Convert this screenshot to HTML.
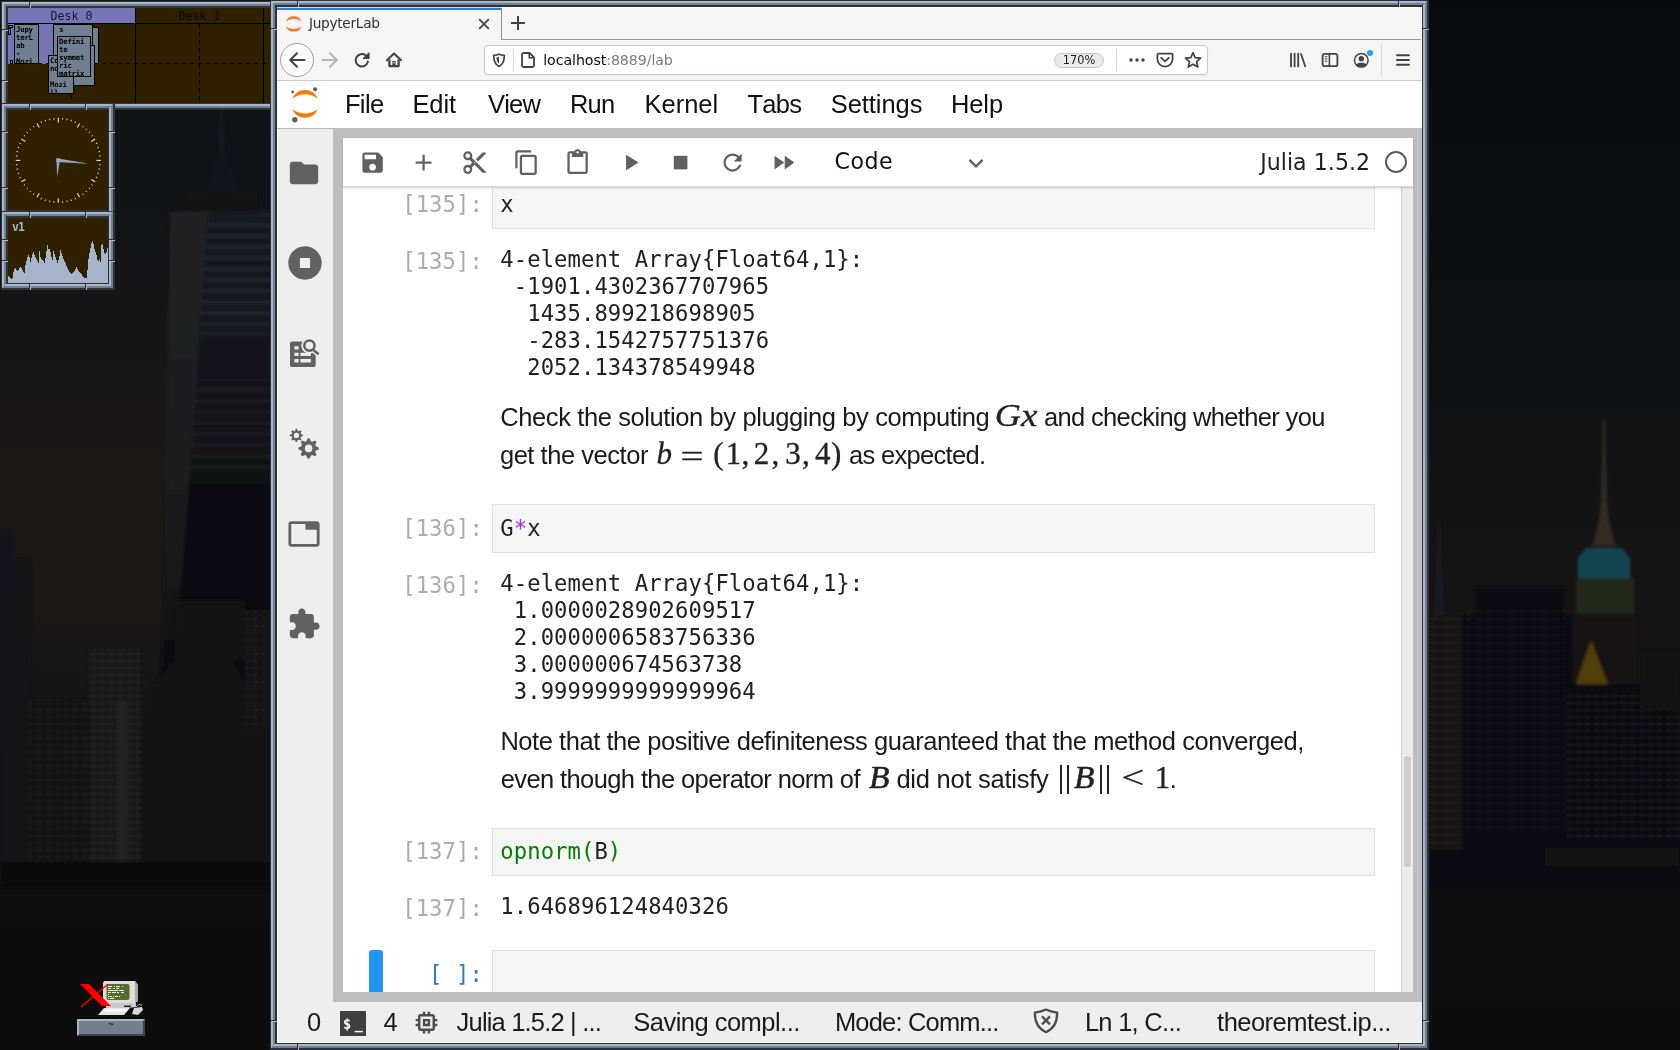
<!DOCTYPE html>
<html lang="en"><head><meta charset="utf-8"><title>JupyterLab</title>
<style>
html,body{margin:0;padding:0}
body{width:1680px;height:1050px;position:relative;overflow:hidden;background:#0d0f14;font-family:"Liberation Sans",sans-serif}
.a{position:absolute}
.t{position:absolute;white-space:pre;line-height:1}
.fr{position:absolute;box-sizing:border-box}
.f1,.f2,.f3,.f4{box-sizing:border-box;width:100%;height:100%;border-style:solid}
.f1{border-color:#2e3338;border-width:1px 2px 2px 1px}
.f2{border-color:#a9b5c8 #708090 #708090 #a9b5c8;border-width:2px}
.f3{border-color:#708090 #a9b5c8 #a9b5c8 #708090;border-width:2px}
.f4{border-color:#2e3338;border-width:2px 1px 1px 2px;position:relative;overflow:hidden}
.nv,.nh{position:absolute;background:#2e3338}
.nv{width:1px;height:6px;box-shadow:1px 0 0 #a9b5c8}
.nh{height:1px;width:6px;box-shadow:0 1px 0 #a9b5c8}
.mono{font-family:"DejaVu Sans Mono","Liberation Mono",monospace}
.dv{font-family:"DejaVu Sans","Liberation Sans",sans-serif}
.ser{font-family:"Liberation Serif",serif}
.mw{background:#708090;border:1px solid #000;box-sizing:border-box;overflow:hidden}
.mt{position:absolute;left:1px;top:1px;font-size:7.4px;line-height:8px;color:#000;white-space:pre;font-weight:bold;letter-spacing:-0.25px}
#root{position:absolute;left:0;top:0;width:1680px;height:1050px;overflow:hidden;will-change:transform}

</style></head>
<body>
<div id="root">
<svg class="a" style="left:0;top:0" width="1680" height="1050" viewBox="0 0 1680 1050">
<defs>
<linearGradient id="sky" x1="0" y1="0" x2="0" y2="1">
<stop offset="0" stop-color="#0a0e13"/><stop offset="0.2" stop-color="#0e1216"/><stop offset="0.38" stop-color="#121517"/>
<stop offset="0.5" stop-color="#171616"/><stop offset="0.57" stop-color="#191716"/><stop offset="0.8" stop-color="#131215"/><stop offset="1" stop-color="#0f0f12"/>
</linearGradient>
<linearGradient id="skyl" x1="0" y1="0" x2="0" y2="1">
<stop offset="0" stop-color="#101419"/><stop offset="0.2" stop-color="#13171c"/><stop offset="0.29" stop-color="#17171a"/>
<stop offset="0.36" stop-color="#1c1919"/><stop offset="0.45" stop-color="#1e1b19"/><stop offset="0.58" stop-color="#1e1b19"/><stop offset="0.72" stop-color="#171516"/><stop offset="0.82" stop-color="#151415"/><stop offset="0.86" stop-color="#101011"/><stop offset="1" stop-color="#0f0f11"/>
</linearGradient>
<linearGradient id="twr" x1="0" y1="0" x2="0" y2="1"><stop offset="0" stop-color="#171d26"/><stop offset="0.35" stop-color="#151820"/><stop offset="0.6" stop-color="#0f1015"/><stop offset="1" stop-color="#111013"/></linearGradient>
<linearGradient id="twl" x1="0" y1="0" x2="0" y2="1"><stop offset="0" stop-color="#26282a"/><stop offset="0.55" stop-color="#222224"/><stop offset="1" stop-color="#161618"/></linearGradient>
<filter id="b2" x="-5%" y="-5%" width="110%" height="110%"><feGaussianBlur stdDeviation="1.4"/></filter>
<filter id="b8" x="-20%" y="-20%" width="140%" height="140%"><feGaussianBlur stdDeviation="14"/></filter>
<pattern id="win1" width="9" height="7" patternUnits="userSpaceOnUse"><rect x="1" y="2" width="5" height="2" fill="#4a4640" opacity="0.4"/></pattern>
<pattern id="win2" width="11" height="8" patternUnits="userSpaceOnUse"><rect x="1" y="2" width="7" height="2" fill="#4a4538" opacity="0.35"/></pattern>
<pattern id="win3" width="40" height="11" patternUnits="userSpaceOnUse"><rect x="0" y="3" width="40" height="4" fill="#363c46" opacity="0.4"/></pattern>
</defs>
<rect x="0" y="0" width="1680" height="1050" fill="url(#sky)"/>
<rect x="0" y="0" width="290" height="1050" fill="url(#skyl)"/>
<g filter="url(#b2)">
<polygon points="220,110 223,110 224,150 225,191 219,191 219,150" fill="#1a1f27"/>
<polygon points="219,150 224,150 238,191 206,191" fill="#121820" opacity="0.8"/>
<rect x="186" y="191" width="70" height="20" fill="#131418"/>
<polygon points="170,212 290,210 290,700 160,700 164,600" fill="url(#twr)"/>
<polygon points="208,216 290,214 290,335 200,335" fill="url(#win3)"/>
<polygon points="196,380 290,380 290,470 190,470" fill="url(#win3)" opacity="0.6"/>
<polygon points="170,213 208,211 190,470 176,640 164,640 164,600" fill="url(#twl)"/>
</g>
<g filter="url(#b2)">
<rect x="0" y="560" width="30" height="320" fill="#13151d"/>
<rect x="0" y="530" width="12" height="60" fill="#121724"/>
<rect x="88" y="648" width="52" height="225" fill="#1e1b1a"/><rect x="88" y="648" width="52" height="225" fill="url(#win1)"/>
<rect x="116" y="700" width="11" height="160" fill="#2a2725"/>
<rect x="28" y="700" width="62" height="175" fill="#161416"/><rect x="28" y="700" width="62" height="175" fill="url(#win1)" opacity="0.7"/>
<polygon points="150,690 170,665 190,650 215,650 235,665 250,690 262,720 290,720 290,875 140,875 140,720" fill="#141316"/>
<rect x="175" y="600" width="70" height="60" fill="#131216"/>
<rect x="245" y="610" width="45" height="120" fill="#15151a"/><rect x="245" y="610" width="45" height="120" fill="url(#win1)" opacity="0.6"/>
<rect x="0" y="862" width="290" height="26" fill="#0e0e10"/>
</g>
<g filter="url(#b2)">
<polygon points="1603,420 1605,420 1607,500 1609,522 1616,546 1592,546 1599,522 1601,500" fill="#3a3326"/>
<polygon points="1586,548 1622,548 1630,558 1630,578 1578,578 1578,558" fill="#17505c"/>
<rect x="1576" y="578" width="58" height="36" fill="#282f1f"/>
<rect x="1573" y="616" width="64" height="100" fill="#1a1413"/>
<polygon points="1591,640 1576,684 1608,684" fill="#5c460e"/>
<rect x="1476" y="587" width="88" height="300" fill="#080b12"/>
<rect x="1462" y="615" width="110" height="240" fill="#0b0d13"/><rect x="1466" y="610" width="100" height="220" fill="url(#win2)" opacity="0.6"/>
<rect x="1429" y="612" width="34" height="250" fill="#1b1917"/><rect x="1429" y="612" width="34" height="250" fill="url(#win2)"/>
<polygon points="1438,520 1440,520 1444,615 1434,615" fill="#1a1f25"/>
<rect x="1565" y="684" width="115" height="170" fill="#101118"/><rect x="1565" y="690" width="115" height="150" fill="url(#win1)" opacity="0.7"/>
<rect x="1640" y="650" width="40" height="60" fill="#131318"/>
<rect x="1429" y="850" width="251" height="40" fill="#101013"/>
<rect x="1545" y="848" width="135" height="18" fill="#191614"/>
</g>
<rect x="0" y="0" width="1680" height="1050" fill="#000" opacity="0.12"/>
</svg>
<div class="fr" style="left:1px;top:1px;width:430px;height:109px"><div class="f1"><div class="f2"><div class="f3"><div class="f4"><div class="a" style="left:0;top:0;width:420px;height:95px;overflow:hidden"><div class="a" style="left:0;top:0;width:420px;height:95px;background:#2f2000"></div><div class="a" style="left:0;top:0;width:127px;height:15px;background:#7575b5"></div><div class="a" style="left:0;top:16px;width:64px;height:40px;background:#7575b5"></div><div class="t mono" style="left:0;top:3px;width:127px;text-align:center;font-size:11.6px;color:#16163c">Desk 0</div><div class="t mono" style="left:128px;top:3px;width:127px;text-align:center;font-size:11.6px;color:#0b0700">Desk 1</div><div class="a" style="left:0;top:15px;width:420px;height:1px;background:#000"></div><div class="a" style="left:127px;top:0;width:1px;height:95px;background:#000"></div><div class="a" style="left:255px;top:0;width:1px;height:95px;background:#000"></div><div class="a" style="left:30px;top:55px;width:390px;height:1px;background:repeating-linear-gradient(to right,#000 0 4px,transparent 4px 8px)"></div><div class="a" style="left:63px;top:87px;width:1px;height:8px;background:repeating-linear-gradient(to bottom,#000 0 4px,transparent 4px 8px)"></div><div class="a" style="left:191px;top:16px;width:1px;height:79px;background:repeating-linear-gradient(to bottom,#000 0 4px,transparent 4px 8px)"></div><div class="a mw" style="left:0px;top:17px;width:5px;height:3px"></div><div class="a mw" style="left:0px;top:20px;width:3px;height:7px"></div><div class="a mw" style="left:2px;top:52px;width:3px;height:4px"></div><div class="a mw" style="left:6px;top:16px;width:25px;height:40px"><div class="mt mono">Jupy<br>terL<br>ab<br>-<br>Mozi</div></div><div class="a mw" style="left:45px;top:16px;width:40px;height:40px"><div class="mt mono">&nbsp;s</div></div><div class="a mw" style="left:84px;top:19px;width:7px;height:37px"></div><div class="a mw" style="left:65px;top:37px;width:22px;height:41px"></div><div class="a mw" style="left:40px;top:47px;width:26px;height:39px"><div class="mt mono">Co<br>no<br>&nbsp;<br>Mozi<br>ll</div></div><div class="a mw" style="left:49px;top:28px;width:34px;height:41px"><div class="mt mono">Defini<br>te<br>symmet<br>ric<br>matrix</div></div></div></div></div></div></div></div>
<i class="nv" style="left:29px;top:2px"></i><i class="nh" style="left:2px;top:29px"></i><i class="nh" style="left:2px;top:80px"></i>
<div class="fr" style="left:1px;top:103px;width:114px;height:114px"><div class="f1"><div class="f2"><div class="f3"><div class="f4"><svg class="a" style="left:0;top:0" width="100" height="100" viewBox="0 0 100 100"><rect width="100" height="100" fill="#2f2000"/><line x1="50.30" y1="12.40" x2="50.30" y2="7.80" stroke="#e4e4e4" stroke-width="1.1"/><line x1="54.60" y1="9.53" x2="54.75" y2="8.03" stroke="#e4e4e4" stroke-width="1"/><line x1="58.85" y1="10.20" x2="59.16" y2="8.73" stroke="#e4e4e4" stroke-width="1"/><line x1="63.00" y1="11.31" x2="63.46" y2="9.88" stroke="#e4e4e4" stroke-width="1"/><line x1="67.02" y1="12.85" x2="67.63" y2="11.48" stroke="#e4e4e4" stroke-width="1"/><line x1="69.30" y1="17.49" x2="71.60" y2="13.51" stroke="#e4e4e4" stroke-width="1.1"/><line x1="74.46" y1="17.15" x2="75.34" y2="15.94" stroke="#e4e4e4" stroke-width="1"/><line x1="77.80" y1="19.86" x2="78.80" y2="18.74" stroke="#e4e4e4" stroke-width="1"/><line x1="80.84" y1="22.90" x2="81.96" y2="21.90" stroke="#e4e4e4" stroke-width="1"/><line x1="83.55" y1="26.24" x2="84.76" y2="25.36" stroke="#e4e4e4" stroke-width="1"/><line x1="83.21" y1="31.40" x2="87.19" y2="29.10" stroke="#e4e4e4" stroke-width="1.1"/><line x1="87.85" y1="33.68" x2="89.22" y2="33.07" stroke="#e4e4e4" stroke-width="1"/><line x1="89.39" y1="37.70" x2="90.82" y2="37.24" stroke="#e4e4e4" stroke-width="1"/><line x1="90.50" y1="41.85" x2="91.97" y2="41.54" stroke="#e4e4e4" stroke-width="1"/><line x1="91.17" y1="46.10" x2="92.67" y2="45.95" stroke="#e4e4e4" stroke-width="1"/><line x1="88.30" y1="50.40" x2="92.90" y2="50.40" stroke="#e4e4e4" stroke-width="1.1"/><line x1="91.17" y1="54.70" x2="92.67" y2="54.85" stroke="#e4e4e4" stroke-width="1"/><line x1="90.50" y1="58.95" x2="91.97" y2="59.26" stroke="#e4e4e4" stroke-width="1"/><line x1="89.39" y1="63.10" x2="90.82" y2="63.56" stroke="#e4e4e4" stroke-width="1"/><line x1="87.85" y1="67.12" x2="89.22" y2="67.73" stroke="#e4e4e4" stroke-width="1"/><line x1="83.21" y1="69.40" x2="87.19" y2="71.70" stroke="#e4e4e4" stroke-width="1.1"/><line x1="83.55" y1="74.56" x2="84.76" y2="75.44" stroke="#e4e4e4" stroke-width="1"/><line x1="80.84" y1="77.90" x2="81.96" y2="78.90" stroke="#e4e4e4" stroke-width="1"/><line x1="77.80" y1="80.94" x2="78.80" y2="82.06" stroke="#e4e4e4" stroke-width="1"/><line x1="74.46" y1="83.65" x2="75.34" y2="84.86" stroke="#e4e4e4" stroke-width="1"/><line x1="69.30" y1="83.31" x2="71.60" y2="87.29" stroke="#e4e4e4" stroke-width="1.1"/><line x1="67.02" y1="87.95" x2="67.63" y2="89.32" stroke="#e4e4e4" stroke-width="1"/><line x1="63.00" y1="89.49" x2="63.46" y2="90.92" stroke="#e4e4e4" stroke-width="1"/><line x1="58.85" y1="90.60" x2="59.16" y2="92.07" stroke="#e4e4e4" stroke-width="1"/><line x1="54.60" y1="91.27" x2="54.75" y2="92.77" stroke="#e4e4e4" stroke-width="1"/><line x1="50.30" y1="88.40" x2="50.30" y2="93.00" stroke="#e4e4e4" stroke-width="1.1"/><line x1="46.00" y1="91.27" x2="45.85" y2="92.77" stroke="#e4e4e4" stroke-width="1"/><line x1="41.75" y1="90.60" x2="41.44" y2="92.07" stroke="#e4e4e4" stroke-width="1"/><line x1="37.60" y1="89.49" x2="37.14" y2="90.92" stroke="#e4e4e4" stroke-width="1"/><line x1="33.58" y1="87.95" x2="32.97" y2="89.32" stroke="#e4e4e4" stroke-width="1"/><line x1="31.30" y1="83.31" x2="29.00" y2="87.29" stroke="#e4e4e4" stroke-width="1.1"/><line x1="26.14" y1="83.65" x2="25.26" y2="84.86" stroke="#e4e4e4" stroke-width="1"/><line x1="22.80" y1="80.94" x2="21.80" y2="82.06" stroke="#e4e4e4" stroke-width="1"/><line x1="19.76" y1="77.90" x2="18.64" y2="78.90" stroke="#e4e4e4" stroke-width="1"/><line x1="17.05" y1="74.56" x2="15.84" y2="75.44" stroke="#e4e4e4" stroke-width="1"/><line x1="17.39" y1="69.40" x2="13.41" y2="71.70" stroke="#e4e4e4" stroke-width="1.1"/><line x1="12.75" y1="67.12" x2="11.38" y2="67.73" stroke="#e4e4e4" stroke-width="1"/><line x1="11.21" y1="63.10" x2="9.78" y2="63.56" stroke="#e4e4e4" stroke-width="1"/><line x1="10.10" y1="58.95" x2="8.63" y2="59.26" stroke="#e4e4e4" stroke-width="1"/><line x1="9.43" y1="54.70" x2="7.93" y2="54.85" stroke="#e4e4e4" stroke-width="1"/><line x1="12.30" y1="50.40" x2="7.70" y2="50.40" stroke="#e4e4e4" stroke-width="1.1"/><line x1="9.43" y1="46.10" x2="7.93" y2="45.95" stroke="#e4e4e4" stroke-width="1"/><line x1="10.10" y1="41.85" x2="8.63" y2="41.54" stroke="#e4e4e4" stroke-width="1"/><line x1="11.21" y1="37.70" x2="9.78" y2="37.24" stroke="#e4e4e4" stroke-width="1"/><line x1="12.75" y1="33.68" x2="11.38" y2="33.07" stroke="#e4e4e4" stroke-width="1"/><line x1="17.39" y1="31.40" x2="13.41" y2="29.10" stroke="#e4e4e4" stroke-width="1.1"/><line x1="17.05" y1="26.24" x2="15.84" y2="25.36" stroke="#e4e4e4" stroke-width="1"/><line x1="19.76" y1="22.90" x2="18.64" y2="21.90" stroke="#e4e4e4" stroke-width="1"/><line x1="22.80" y1="19.86" x2="21.80" y2="18.74" stroke="#e4e4e4" stroke-width="1"/><line x1="26.14" y1="17.15" x2="25.26" y2="15.94" stroke="#e4e4e4" stroke-width="1"/><line x1="31.30" y1="17.49" x2="29.00" y2="13.51" stroke="#e4e4e4" stroke-width="1.1"/><line x1="33.58" y1="12.85" x2="32.97" y2="11.48" stroke="#e4e4e4" stroke-width="1"/><line x1="37.60" y1="11.31" x2="37.14" y2="9.88" stroke="#e4e4e4" stroke-width="1"/><line x1="41.75" y1="10.20" x2="41.44" y2="8.73" stroke="#e4e4e4" stroke-width="1"/><line x1="46.00" y1="9.53" x2="45.85" y2="8.03" stroke="#e4e4e4" stroke-width="1"/><polygon points="81.6,53.7 48.1,52.1 48.5,48.3" fill="#93a3c0"/><polygon points="49.1,67.4 48.5,48.3 52.3,48.5" fill="#93a3c0"/></svg></div></div></div></div></div>
<i class="nv" style="left:29px;top:104px"></i><i class="nv" style="left:85px;top:104px"></i><i class="nh" style="left:2px;top:131px"></i><i class="nh" style="left:2px;top:187px"></i><i class="nh" style="left:109px;top:131px"></i><i class="nh" style="left:109px;top:187px"></i>
<div class="fr" style="left:1px;top:211px;width:114px;height:79px"><div class="f1"><div class="f2"><div class="f3"><div class="f4"><svg class="a" style="left:0;top:0" width="100" height="65" viewBox="0 0 100 65" shape-rendering="crispEdges"><rect width="100" height="65" fill="#2f2000"/><polygon points="0,65 -0.2,57.7 2.5,60.1 4.4,61.0 5.3,54.4 7.2,49.1 8.7,52.5 10.1,53.0 12.2,48.2 14.9,52.5 16.8,55.8 17.5,46.8 19.1,40.1 20.1,36.3 21.5,39.1 22.5,43.9 23.9,38.2 25.3,33.4 26.8,38.2 28.7,41.5 30.6,44.9 31.5,33.4 33.0,41.0 34.9,42.0 36.6,44.9 37.7,39.1 39.3,26.0 40.6,31.5 41.5,30.6 43.0,36.3 44.4,43.0 45.3,32.0 46.8,37.2 48.2,41.0 49.6,44.9 51.0,41.0 52.5,32.0 53.9,36.8 55.3,40.1 57.2,44.4 58.7,48.7 60.6,52.5 63.4,55.8 64.9,54.4 66.3,53.0 68.5,49.1 70.1,52.5 73.0,55.8 75.8,59.1 78.2,60.9 79.1,58.2 80.1,43.9 81.5,35.3 83.0,26.8 84.4,23.1 85.8,26.8 86.8,32.0 88.2,35.3 90.1,44.4 91.5,41.0 92.5,43.9 93.4,26.8 94.7,25.3 95.8,33.4 97.2,36.8 98.7,33.4 99.6,30.1 100.6,29.6 100,65" fill="#a6b5cc"/></svg><div class="t mono" style="left:4px;top:4px;font-size:11.5px;font-weight:bold;color:#a6b5cc;letter-spacing:-0.8px">v1</div></div></div></div></div></div>
<i class="nv" style="left:29px;top:212px"></i><i class="nv" style="left:85px;top:212px"></i><i class="nv" style="left:29px;top:284px"></i><i class="nv" style="left:85px;top:284px"></i><i class="nh" style="left:2px;top:239px"></i><i class="nh" style="left:2px;top:260px"></i><i class="nh" style="left:109px;top:239px"></i><i class="nh" style="left:109px;top:260px"></i>
<svg class="a" style="left:76px;top:978px" width="72" height="60" viewBox="76 978 72 60">
<polygon points="104,981 135,981 138,985 138,1001 135,1003 104,1003 103,1001 103,983" fill="#dcdcdc"/>
<polygon points="135,981 138,985 138,1001 135,1003" fill="#a8a8a8"/>
<rect x="106.5" y="984" width="23" height="16" rx="2" fill="#556b2f"/>
<g fill="#f0f0e0"><rect x="108" y="986" width="4" height="1"/><rect x="114" y="986" width="1" height="1"/><rect x="116" y="986" width="4" height="1"/><rect x="122" y="986" width="1" height="1"/>
<rect x="108" y="988" width="3" height="1"/><rect x="113" y="988" width="2" height="1"/><rect x="116" y="988" width="3" height="1"/>
<rect x="108" y="990" width="10" height="1"/><rect x="119" y="990" width="5" height="1"/>
<rect x="108" y="992" width="3" height="1"/><rect x="112" y="992" width="4" height="1"/><rect x="117" y="992" width="2" height="1"/><rect x="121" y="992" width="3" height="1"/>
<rect x="108" y="994" width="1" height="1"/><rect x="108" y="996" width="4" height="1"/><rect x="113" y="996" width="1" height="1"/><rect x="115" y="996" width="3" height="1"/><rect x="119" y="996" width="1" height="1"/>
<rect x="108" y="998" width="1" height="1"/><rect x="110" y="998" width="4" height="1"/></g>
<polygon points="106,1003 136,1003 136,1007 128,1008 106,1008" fill="#c9c9c9"/>
<rect x="124" y="1005.5" width="7" height="1.5" fill="#222"/>
<polygon points="104,1008 130,1008 124,1015 98,1015" fill="#e6e6e6"/>
<polygon points="106,1009.5 126,1009.5 124,1011.5 104,1011.5" fill="#ffffff"/>
<polygon points="134,1008 142,1007 143,1010 138,1015 132,1014" fill="#d8d8d8"/>
<path d="M136,1007 q2,-4 6,-2" stroke="#bbb" fill="none" stroke-width="1"/>
<polygon points="80,984 89,984 111,1006 102,1006" fill="#ff0000"/>
<polygon points="107,984 109,984 82,1007 80,1007" fill="#ff0000"/>
</svg>
<div class="a" style="left:77px;top:1019px;width:68px;height:17px;box-sizing:border-box;background:#708090;border-style:solid;border-width:2px;border-color:#a9b5c8 #3c4550 #3c4550 #a9b5c8"></div>
<div class="t mono" style="left:77px;top:1020px;width:68px;text-align:center;font-size:9px;color:#000">~</div>
<div class="fr" style="left:270px;top:0px;width:1159px;height:1050px"><div class="f1"><div class="f2"><div class="f3"><div class="f4"><div class="a" style="left:-277px;top:-7px;width:1680px;height:1050px"><div class="a" style="left:277px;top:7px;width:1145px;height:74px;background:#f6f5f3"></div><div class="a" style="left:277px;top:7px;width:1145px;height:1px;background:#fff"></div><div class="a" style="left:277px;top:7px;width:224px;height:1px;background:#d9d6d0"></div><div class="a" style="left:277px;top:8px;width:224px;height:2px;background:#2a7de1"></div><div class="a" style="left:501px;top:8px;width:1px;height:32px;background:#8e8d8b"></div><div class="a" style="left:501px;top:39px;width:921px;height:1px;background:#9a9997"></div><div class="t" style="left:308.91px;top:15px;font-family:'DejaVu Sans','Liberation Sans',sans-serif;font-size:13.7px;line-height:16px;color:#2e3134;font-kerning:none;letter-spacing:-0.283px;">JupyterLab</div><svg class="a" style="left:477px;top:17px" width="14" height="14" viewBox="0 0 14 14"><path d="M2.2 2.2 L11.8 11.8 M11.8 2.2 L2.2 11.8" stroke="#3e4346" stroke-width="1.7" fill="none"/></svg><svg class="a" style="left:510px;top:15px" width="16" height="16" viewBox="0 0 16 16"><path d="M8 1 V15 M1 8 H15" stroke="#3e4346" stroke-width="2" fill="none"/></svg><div class="a" style="left:277px;top:80px;width:1145px;height:1px;background:#cfccc7"></div><div class="a" style="left:280px;top:43px;width:34px;height:34px;box-sizing:border-box;border:1px solid #a3a2a0;border-radius:50%;background:#fbfbfa"></div><svg class="a" style="left:288px;top:51px" width="18" height="18" viewBox="0 0 18 18"><path d="M16.5 9 H2.5 M9 2.2 L2.2 9 L9 15.8" stroke="#3e4346" stroke-width="2" fill="none" stroke-linecap="round" stroke-linejoin="round"/></svg><svg class="a" style="left:321px;top:51px" width="18" height="18" viewBox="0 0 18 18"><path d="M1.5 9 H15.5 M9 2.2 L15.8 9 L9 15.8" stroke="#b4b6b7" stroke-width="2" fill="none" stroke-linecap="round" stroke-linejoin="round"/></svg><svg class="a" style="left:353px;top:51px" width="18" height="18" viewBox="0 0 18 18"><path d="M14.9 10.6 A6.2 6.2 0 1 1 12.6 4.3" stroke="#3e4346" stroke-width="2" fill="none" stroke-linecap="round"/><path d="M16 1.8 V7.4 H10.4Z" fill="#3e4346" stroke="#3e4346" stroke-width="1.2" stroke-linejoin="round"/></svg><svg class="a" style="left:385px;top:51px" width="18" height="18" viewBox="0 0 18 18"><path d="M2 9.2 L9 2.4 L16 9.2" stroke="#3e4346" stroke-width="2.1" fill="none" stroke-linecap="round" stroke-linejoin="round"/><path d="M4.4 8.4 V15.2 H13.6 V8.4" stroke="#3e4346" stroke-width="2.3" fill="none" stroke-linejoin="round"/><rect x="7.4" y="10" width="3.2" height="5.4" fill="#3e4346"/><rect x="8.4" y="11" width="1.3" height="1.5" fill="#ddd"/></svg><div class="a" style="left:484px;top:45px;width:724px;height:30px;box-sizing:border-box;border:1px solid #cbc8c3;border-radius:4px;background:#fff;box-shadow:0 1px 2px rgba(0,0,0,.06)"></div><svg class="a" style="left:491px;top:52px" width="16" height="16" viewBox="0 0 16 16"><path d="M8 2.2 C6.2 3 4.4 3.3 2.7 3.4 C2.7 8.6 4 12.3 8 14.4 C12 12.3 13.3 8.6 13.3 3.4 C11.6 3.3 9.8 3 8 2.2Z" stroke="#3e4346" stroke-width="1.7" fill="none" stroke-linejoin="round"/><path d="M8 4.6 V11.8 C6.4 10.6 5.6 8.6 5.4 5.6 C6.4 5.5 7.2 5.1 8 4.6Z" fill="#3e4346"/></svg><div class="a" style="left:513px;top:49px;width:1px;height:22px;background:#d6d3ce"></div><svg class="a" style="left:520px;top:52px" width="16" height="16" viewBox="0 0 16 16"><path d="M3.8 1 H9.6 L14 5.4 V13.4 A1.7 1.7 0 0 1 12.3 15 H3.8 A1.7 1.7 0 0 1 2 13.4 V2.7 A1.7 1.7 0 0 1 3.8 1Z" stroke="#3e4346" stroke-width="1.8" fill="none" stroke-linejoin="round"/><path d="M9.3 1.3 V5.8 H13.8" stroke="#3e4346" stroke-width="1.6" fill="none"/></svg><div class="t" style="left:543.26px;top:52px;font-family:'DejaVu Sans','Liberation Sans',sans-serif;font-size:14.2px;line-height:16px;color:#0c0c0d;font-kerning:none;letter-spacing:-0.082px;">localhost<span style="color:#7b7b7d">:8889/lab</span></div><div class="a dv" style="left:1054px;top:53px;width:50px;height:15px;box-sizing:border-box;border:1px solid #c9c7c4;border-radius:8px;background:#ecebea;font-size:11.4px;line-height:13px;text-align:center;color:#1c1c1e">170%</div><div class="a" style="left:1116px;top:49px;width:1px;height:22px;background:#d6d3ce"></div><svg class="a" style="left:1128px;top:57px" width="18" height="6" viewBox="0 0 18 6"><circle cx="3" cy="3" r="1.7" fill="#3e4346"/><circle cx="9" cy="3" r="1.7" fill="#3e4346"/><circle cx="15" cy="3" r="1.7" fill="#3e4346"/></svg><svg class="a" style="left:1156px;top:51px" width="18" height="18" viewBox="0 0 18 18"><path d="M2.6 2.6 H15.4 A1.2 1.2 0 0 1 16.6 3.8 V8 A7.6 7.6 0 0 1 1.4 8 V3.8 A1.2 1.2 0 0 1 2.6 2.6Z" stroke="#3e4346" stroke-width="1.8" fill="none" stroke-linejoin="round"/><path d="M5.2 6.8 L9 10.4 L12.8 6.8" stroke="#3e4346" stroke-width="1.8" fill="none" stroke-linecap="round" stroke-linejoin="round"/></svg><svg class="a" style="left:1184px;top:51px" width="18" height="18" viewBox="0 0 18 18"><path d="M9 1.6 L11.2 6.6 L16.6 7.1 L12.5 10.7 L13.8 16 L9 13.2 L4.2 16 L5.5 10.7 L1.4 7.1 L6.8 6.6Z" stroke="#3e4346" stroke-width="1.7" fill="none" stroke-linejoin="round"/></svg><svg class="a" style="left:1289px;top:51px" width="18" height="18" viewBox="0 0 18 18"><path d="M2 2.6 V15.4 M5.6 2.6 V15.4 M9.2 2.6 V15.4 M12 3 L16.2 15.2" stroke="#3e4346" stroke-width="1.8" fill="none" stroke-linecap="round"/></svg><svg class="a" style="left:1321px;top:51px" width="18" height="18" viewBox="0 0 18 18"><rect x="1.6" y="2.8" width="14.8" height="12.4" rx="2" stroke="#3e4346" stroke-width="1.8" fill="none"/><path d="M8.4 2.8 V15.2" stroke="#3e4346" stroke-width="1.6"/><path d="M3.8 5.8 H6.4 M3.8 8 H6.4 M3.8 10.2 H6.4" stroke="#3e4346" stroke-width="1.1"/></svg><svg class="a" style="left:1353px;top:52px" width="16.6" height="16.6" viewBox="0 0 18 18"><circle cx="9" cy="9" r="7.4" stroke="#3e4346" stroke-width="1.6" fill="none"/><circle cx="9" cy="7.2" r="2.9" fill="#3e4346"/><path d="M3.6 13.6 C5 10.9 13 10.9 14.4 13.6 A7 7 0 0 1 3.6 13.6Z" fill="#3e4346"/></svg><div class="a" style="left:1366.6px;top:49.6px;width:6.6px;height:6.6px;border-radius:50%;background:#12a9ee"></div><div class="a" style="left:1381px;top:44px;width:1px;height:32px;background:#d9d6d2"></div><svg class="a" style="left:1394px;top:51px" width="18" height="18" viewBox="0 0 18 18"><path d="M3 4.2 H15 M3 9 H15 M3 13.8 H15" stroke="#3e4346" stroke-width="1.9" fill="none" stroke-linecap="round"/></svg><div class="a" style="left:277px;top:81px;width:1145px;height:962px;background:#fff"></div><div class="a" style="left:333px;top:128px;width:1089px;height:874px;background:#bdbdbd"></div><div class="a" style="left:277px;top:128px;width:56px;height:874px;background:#eeeeee"></div><div class="a" style="left:277px;top:1002px;width:1145px;height:40px;background:#eeeeee"></div><div class="a" style="left:1421px;top:7px;width:1px;height:74px;background:#fff"></div><div class="a" style="left:277px;top:81px;width:1px;height:962px;background:#fff"></div><div class="a" style="left:277px;top:128px;width:1145px;height:1px;background:#bdbdbd"></div><div class="a" style="left:343px;top:138px;width:1070px;height:854px;background:#fff"></div><svg class="a" style="left:280px;top:82px" width="60" height="45" viewBox="280 82 60 45"><path fill="#f57c00" d="M292.20 98.70 A13.78 13.78 0 0 1 317.90 98.70 A20.60 20.60 0 0 0 292.20 98.70Z"/><path fill="#f57c00" d="M292.20 109.00 A13.78 13.78 0 0 0 317.90 109.00 A20.60 20.60 0 0 1 292.20 109.00Z"/><circle cx="315.1" cy="89.3" r="2.1" fill="#616161"/><circle cx="292.6" cy="92" r="1.45" fill="#6a6a6a"/><circle cx="294.8" cy="119.7" r="2.7" fill="#616161"/></svg><svg class="a" style="left:284px;top:14px" width="20" height="20" viewBox="284 14 20 20"><path fill="#f37726" d="M286.00 21.40 A8.30 8.30 0 0 1 301.40 21.40 A12.70 12.70 0 0 0 286.00 21.40Z"/><path fill="#f37726" d="M286.00 26.40 A8.30 8.30 0 0 0 301.40 26.40 A12.70 12.70 0 0 1 286.00 26.40Z"/></svg><div class="t" style="left:344.91px;top:90px;font-family:'Liberation Sans',sans-serif;font-size:25.5px;line-height:28px;color:#111;font-kerning:none;letter-spacing:-0.621px;">File</div><div class="t" style="left:412.41px;top:90px;font-family:'Liberation Sans',sans-serif;font-size:25.5px;line-height:28px;color:#111;font-kerning:none;letter-spacing:-0.054px;">Edit</div><div class="t" style="left:487.89px;top:90px;font-family:'Liberation Sans',sans-serif;font-size:25.5px;line-height:28px;color:#111;font-kerning:none;letter-spacing:-0.740px;">View</div><div class="t" style="left:569.91px;top:90px;font-family:'Liberation Sans',sans-serif;font-size:25.5px;line-height:28px;color:#111;font-kerning:none;letter-spacing:-0.766px;">Run</div><div class="t" style="left:644.41px;top:90px;font-family:'Liberation Sans',sans-serif;font-size:25.5px;line-height:28px;color:#111;font-kerning:none;letter-spacing:0.017px;">Kernel</div><div class="t" style="left:747.43px;top:90px;font-family:'Liberation Sans',sans-serif;font-size:25.5px;line-height:28px;color:#111;font-kerning:none;letter-spacing:-0.732px;">Tabs</div><div class="t" style="left:830.84px;top:90px;font-family:'Liberation Sans',sans-serif;font-size:25.5px;line-height:28px;color:#111;font-kerning:none;letter-spacing:-0.080px;">Settings</div><div class="t" style="left:950.91px;top:90px;font-family:'Liberation Sans',sans-serif;font-size:25.5px;line-height:28px;color:#111;font-kerning:none;letter-spacing:-0.094px;">Help</div><svg class="a" style="left:287px;top:156px" width="34" height="34" viewBox="0 0 24 24"><path fill="#616161" d="M10 4H4c-1.1 0-1.99.9-1.99 2L2 18c0 1.1.9 2 2 2h16c1.1 0 2-.9 2-2V8c0-1.1-.9-2-2-2h-8l-2-2z"/></svg><svg class="a" style="left:287.5px;top:246px" width="34" height="34" viewBox="0 0 24 24"><path fill="#616161" d="M12 0.2C5.5 0.2 0.2 5.5 0.2 12S5.5 23.8 12 23.800000000000001 23.8 18.5 23.8 12 18.5 0.2 12 0.2zm3.6 15.4H8.4V8.4h7.2v7.2z"/></svg><svg class="a" style="left:286px;top:334px" width="38" height="38" viewBox="286 334 38 38">
<path fill="#616161" fill-rule="evenodd" d="M292 341.4 H313.7 A2 2 0 0 1 315.7 343.4 V365 A2 2 0 0 1 313.7 367 H292 A2 2 0 0 1 290 365 V343.4 A2 2 0 0 1 292 341.4Z M294.4 346.3 h4.2 v3.2 h-4.2z M294.4 352.7 h4.2 v3.4 h-4.2z M300.4 352.7 h10.4 v3.4 h-10.4z M294.4 359 h4.2 v3.4 h-4.2z M300.4 359 h10.4 v3.4 h-10.4z"/>
<circle cx="309.4" cy="345.6" r="8.1" fill="#eeeeee"/>
<path d="M313.3 350 L318.9 354.6" stroke="#eeeeee" stroke-width="5.4"/>
<circle cx="309.4" cy="345.6" r="5.1" fill="none" stroke="#616161" stroke-width="2.5"/>
<path d="M313.4 350 L318.6 354.3" stroke="#616161" stroke-width="2.7"/>
</svg><svg class="a" style="left:287px;top:426px" width="36" height="36" viewBox="287 426 36 36"><polygon fill="#616161" points="302.97,434.75 302.97,436.05 300.99,436.79 300.63,437.66 301.50,439.59 300.59,440.50 298.66,439.63 297.79,439.99 297.05,441.97 295.75,441.97 295.01,439.99 294.14,439.63 292.21,440.50 291.30,439.59 292.17,437.66 291.81,436.79 289.83,436.05 289.83,434.75 291.81,434.01 292.17,433.14 291.30,431.21 292.21,430.30 294.14,431.17 295.01,430.81 295.75,428.83 297.05,428.83 297.79,430.81 298.66,431.17 300.59,430.30 301.50,431.21 300.63,433.14 300.99,434.01"/><circle cx="296.4" cy="435.4" r="2.6" fill="#eeeeee"/><polygon fill="#616161" points="318.75,447.40 318.75,449.40 315.87,450.61 315.30,451.98 316.48,454.87 315.07,456.28 312.18,455.10 310.81,455.67 309.60,458.55 307.60,458.55 306.39,455.67 305.02,455.10 302.13,456.28 300.72,454.87 301.90,451.98 301.33,450.61 298.45,449.40 298.45,447.40 301.33,446.19 301.90,444.82 300.72,441.93 302.13,440.52 305.02,441.70 306.39,441.13 307.60,438.25 309.60,438.25 310.81,441.13 312.18,441.70 315.07,440.52 316.48,441.93 315.30,444.82 315.87,446.19"/><circle cx="308.6" cy="448.4" r="3.8" fill="#eeeeee"/></svg><svg class="a" style="left:287px;top:516.6px" width="34" height="34" viewBox="0 0 24 24"><path fill="#616161" d="M21 3H3c-1.1 0-2 .9-2 2v14c0 1.1.9 2 2 2h18c1.1 0 2-.9 2-2V5c0-1.1-.9-2-2-2zm0 16H3V5h10v4h8v10z"/></svg><svg class="a" style="left:287px;top:607px" width="34" height="34" viewBox="0 0 24 24"><path fill="#616161" d="M20.5 11H19V7c0-1.1-.9-2-2-2h-4V3.5C13 2.12 11.88 1 10.5 1S8 2.12 8 3.5V5H4c-1.1 0-1.99.9-1.99 2v3.8H3.5c1.49 0 2.7 1.21 2.7 2.7s-1.21 2.7-2.7 2.7H2V20c0 1.1.9 2 2 2h3.8v-1.5c0-1.49 1.21-2.7 2.7-2.7 1.49 0 2.7 1.21 2.7 2.7V22H17c1.1 0 2-.9 2-2v-4h1.5c1.38 0 2.5-1.12 2.5-2.5S21.88 11 20.5 11z"/></svg><div class="a" style="left:0;top:0;width:1680px;height:992px;overflow:hidden;clip-path:inset(187px 267px 0 343px)"><div class="a" style="left:492px;top:181px;width:883px;height:48px;box-sizing:border-box;border:1px solid #e0e0e0;background:#f5f5f5"></div><div class="t" style="left:402.22px;top:191px;font-family:'DejaVu Sans Mono','Liberation Mono',monospace;font-size:22.2px;line-height:26px;color:#adadad;font-kerning:none;letter-spacing:0.085px;">[135]:</div><div class="t" style="left:500.30px;top:191px;font-family:'DejaVu Sans Mono','Liberation Mono',monospace;font-size:22.2px;line-height:26px;color:#212121;font-kerning:none;letter-spacing:0.085px;">x</div><div class="t" style="left:402.22px;top:248px;font-family:'DejaVu Sans Mono','Liberation Mono',monospace;font-size:22.2px;line-height:26px;color:#adadad;font-kerning:none;letter-spacing:0.085px;">[135]:</div><div class="t" style="left:500.30px;top:246px;font-family:'DejaVu Sans Mono','Liberation Mono',monospace;font-size:22.2px;line-height:26px;color:#212121;font-kerning:none;letter-spacing:0.085px;">4-element Array{Float64,1}:</div><div class="t" style="left:500.30px;top:273px;font-family:'DejaVu Sans Mono','Liberation Mono',monospace;font-size:22.2px;line-height:26px;color:#212121;font-kerning:none;letter-spacing:0.085px;"> -1901.4302367707965</div><div class="t" style="left:500.30px;top:300px;font-family:'DejaVu Sans Mono','Liberation Mono',monospace;font-size:22.2px;line-height:26px;color:#212121;font-kerning:none;letter-spacing:0.085px;">  1435.899218698905</div><div class="t" style="left:500.30px;top:327px;font-family:'DejaVu Sans Mono','Liberation Mono',monospace;font-size:22.2px;line-height:26px;color:#212121;font-kerning:none;letter-spacing:0.085px;">  -283.1542757751376</div><div class="t" style="left:500.30px;top:354px;font-family:'DejaVu Sans Mono','Liberation Mono',monospace;font-size:22.2px;line-height:26px;color:#212121;font-kerning:none;letter-spacing:0.085px;">  2052.134378549948</div><div class="t" style="left:500.21px;top:403px;font-family:'Liberation Sans',sans-serif;font-size:25.5px;line-height:28px;color:#1a1a1a;font-kerning:none;letter-spacing:-0.396px;">Check the solution by plugging by computing</div><div class="t" style="left:995.29px;top:398px;font-family:'Liberation Serif',serif;font-size:31px;line-height:35px;color:#222;font-kerning:none;font-style:italic;-webkit-text-stroke:0.3px #222;transform:scaleX(1.17);transform-origin:1.71px 50%;">G</div><div class="t" style="left:1020.68px;top:398px;font-family:'Liberation Serif',serif;font-size:31px;line-height:35px;color:#222;font-kerning:none;font-style:italic;-webkit-text-stroke:0.3px #222;transform:scaleX(1.2);transform-origin:-0.38px 50%;">x</div><div class="t" style="left:1043.92px;top:403px;font-family:'Liberation Sans',sans-serif;font-size:25.5px;line-height:28px;color:#1a1a1a;font-kerning:none;letter-spacing:-0.641px;">and checking whether you</div><div class="t" style="left:499.93px;top:441px;font-family:'Liberation Sans',sans-serif;font-size:25.5px;line-height:28px;color:#1a1a1a;font-kerning:none;letter-spacing:-0.462px;">get the vector</div><div class="t" style="left:656.55px;top:436px;font-family:'Liberation Serif',serif;font-size:31px;line-height:35px;color:#222;font-kerning:none;font-style:italic;-webkit-text-stroke:0.3px #222;">b</div><div class="t" style="left:680.66px;top:439px;font-family:'Liberation Serif',serif;font-size:31px;line-height:35px;color:#222;font-kerning:none;-webkit-text-stroke:0.3px #222;transform:scaleX(1.32);transform-origin:1.54px 50%;">=</div><div class="t" style="left:713.24px;top:436px;font-family:'Liberation Serif',serif;font-size:31px;line-height:35px;color:#222;font-kerning:none;-webkit-text-stroke:0.3px #222;">(</div><div class="t" style="left:725.68px;top:436px;font-family:'Liberation Serif',serif;font-size:31px;line-height:35px;color:#222;font-kerning:none;-webkit-text-stroke:0.3px #222;">1</div><div class="t" style="left:741.42px;top:436px;font-family:'Liberation Serif',serif;font-size:31px;line-height:35px;color:#222;font-kerning:none;-webkit-text-stroke:0.3px #222;">,</div><div class="t" style="left:753.84px;top:436px;font-family:'Liberation Serif',serif;font-size:31px;line-height:35px;color:#222;font-kerning:none;-webkit-text-stroke:0.3px #222;">2</div><div class="t" style="left:771.42px;top:436px;font-family:'Liberation Serif',serif;font-size:31px;line-height:35px;color:#222;font-kerning:none;-webkit-text-stroke:0.3px #222;">,</div><div class="t" style="left:785.22px;top:436px;font-family:'Liberation Serif',serif;font-size:31px;line-height:35px;color:#222;font-kerning:none;-webkit-text-stroke:0.3px #222;">3</div><div class="t" style="left:802.02px;top:436px;font-family:'Liberation Serif',serif;font-size:31px;line-height:35px;color:#222;font-kerning:none;-webkit-text-stroke:0.3px #222;">,</div><div class="t" style="left:814.89px;top:436px;font-family:'Liberation Serif',serif;font-size:31px;line-height:35px;color:#222;font-kerning:none;-webkit-text-stroke:0.3px #222;">4</div><div class="t" style="left:831.00px;top:436px;font-family:'Liberation Serif',serif;font-size:31px;line-height:35px;color:#222;font-kerning:none;-webkit-text-stroke:0.3px #222;">)</div><div class="t" style="left:848.92px;top:441px;font-family:'Liberation Sans',sans-serif;font-size:25.5px;line-height:28px;color:#1a1a1a;font-kerning:none;letter-spacing:-0.676px;">as expected.</div><div class="a" style="left:492px;top:504px;width:883px;height:49px;box-sizing:border-box;border:1px solid #e0e0e0;background:#f5f5f5"></div><div class="t" style="left:402.22px;top:515px;font-family:'DejaVu Sans Mono','Liberation Mono',monospace;font-size:22.2px;line-height:26px;color:#adadad;font-kerning:none;letter-spacing:0.085px;">[136]:</div><div class="t" style="left:500.29px;top:515px;font-family:'DejaVu Sans Mono','Liberation Mono',monospace;font-size:22.2px;line-height:26px;color:#212121;font-kerning:none;letter-spacing:0.085px;">G<span style="color:#aa22ff">*</span>x</div><div class="t" style="left:402.22px;top:572px;font-family:'DejaVu Sans Mono','Liberation Mono',monospace;font-size:22.2px;line-height:26px;color:#adadad;font-kerning:none;letter-spacing:0.085px;">[136]:</div><div class="t" style="left:500.30px;top:570px;font-family:'DejaVu Sans Mono','Liberation Mono',monospace;font-size:22.2px;line-height:26px;color:#212121;font-kerning:none;letter-spacing:0.085px;">4-element Array{Float64,1}:</div><div class="t" style="left:500.30px;top:597px;font-family:'DejaVu Sans Mono','Liberation Mono',monospace;font-size:22.2px;line-height:26px;color:#212121;font-kerning:none;letter-spacing:0.085px;"> 1.0000028902609517</div><div class="t" style="left:500.30px;top:624px;font-family:'DejaVu Sans Mono','Liberation Mono',monospace;font-size:22.2px;line-height:26px;color:#212121;font-kerning:none;letter-spacing:0.085px;"> 2.0000006583756336</div><div class="t" style="left:500.30px;top:651px;font-family:'DejaVu Sans Mono','Liberation Mono',monospace;font-size:22.2px;line-height:26px;color:#212121;font-kerning:none;letter-spacing:0.085px;"> 3.000000674563738</div><div class="t" style="left:500.30px;top:678px;font-family:'DejaVu Sans Mono','Liberation Mono',monospace;font-size:22.2px;line-height:26px;color:#212121;font-kerning:none;letter-spacing:0.085px;"> 3.9999999999999964</div><div class="t" style="left:500.41px;top:727px;font-family:'Liberation Sans',sans-serif;font-size:25.5px;line-height:28px;color:#1a1a1a;font-kerning:none;letter-spacing:-0.452px;">Note that the positive definiteness guaranteed that the method converged,</div><div class="t" style="left:500.67px;top:765px;font-family:'Liberation Sans',sans-serif;font-size:25.5px;line-height:28px;color:#1a1a1a;font-kerning:none;letter-spacing:-0.603px;">even though the operator norm of</div><div class="t" style="left:868.96px;top:760px;font-family:'Liberation Serif',serif;font-size:31px;line-height:35px;color:#222;font-kerning:none;font-style:italic;-webkit-text-stroke:0.55px #222;transform:scaleX(1.08);transform-origin:0.29px 50%;">B</div><div class="t" style="left:896.43px;top:765px;font-family:'Liberation Sans',sans-serif;font-size:25.5px;line-height:28px;color:#1a1a1a;font-kerning:none;letter-spacing:-0.253px;">did not satisfy</div><div class="a" style="left:1060px;top:765px;width:2px;height:29px;background:#222"></div><div class="a" style="left:1067px;top:765px;width:2px;height:29px;background:#222"></div><div class="a" style="left:1099.5px;top:765px;width:2px;height:29px;background:#222"></div><div class="a" style="left:1106.5px;top:765px;width:2px;height:29px;background:#222"></div><div class="t" style="left:1074.21px;top:760px;font-family:'Liberation Serif',serif;font-size:31px;line-height:35px;color:#222;font-kerning:none;font-style:italic;-webkit-text-stroke:0.55px #222;transform:scaleX(1.08);transform-origin:0.29px 50%;">B</div><div class="t" style="left:1122.21px;top:760px;font-family:'Liberation Serif',serif;font-size:31px;line-height:35px;color:#222;font-kerning:none;-webkit-text-stroke:0.3px #222;transform:scaleX(1.3);transform-origin:1.54px 50%;">&lt;</div><div class="t" style="left:1154.78px;top:760px;font-family:'Liberation Serif',serif;font-size:31px;line-height:35px;color:#222;font-kerning:none;-webkit-text-stroke:0.3px #222;">1</div><div class="t" style="left:1169.67px;top:765px;font-family:'Liberation Sans',sans-serif;font-size:25.5px;line-height:28px;color:#1a1a1a;font-kerning:none;">.</div><div class="a" style="left:492px;top:828px;width:883px;height:48px;box-sizing:border-box;border:1px solid #e0e0e0;background:#f5f5f5"></div><div class="t" style="left:402.22px;top:838px;font-family:'DejaVu Sans Mono','Liberation Mono',monospace;font-size:22.2px;line-height:26px;color:#adadad;font-kerning:none;letter-spacing:0.085px;">[137]:</div><div class="t" style="left:500.31px;top:838px;font-family:'DejaVu Sans Mono','Liberation Mono',monospace;font-size:22.2px;line-height:26px;color:#008000;font-kerning:none;letter-spacing:0.085px;">opnorm(<span style="color:#212121">B</span>)</div><div class="t" style="left:402.22px;top:895px;font-family:'DejaVu Sans Mono','Liberation Mono',monospace;font-size:22.2px;line-height:26px;color:#adadad;font-kerning:none;letter-spacing:0.085px;">[137]:</div><div class="t" style="left:500.30px;top:893px;font-family:'DejaVu Sans Mono','Liberation Mono',monospace;font-size:22.2px;line-height:26px;color:#212121;font-kerning:none;letter-spacing:0.085px;">1.646896124840326</div><div class="a" style="left:369px;top:950px;width:14px;height:60px;background:#2196f3;border-radius:3px 3px 0 0"></div><div class="a" style="left:492px;top:950px;width:883px;height:60px;box-sizing:border-box;border:1px solid #e0e0e0;background:#f5f5f5"></div><div class="t" style="left:429.12px;top:961px;font-family:'DejaVu Sans Mono','Liberation Mono',monospace;font-size:22.2px;line-height:26px;color:#307fc1;font-kerning:none;letter-spacing:0.085px;">[ ]:</div><div class="a" style="left:1401px;top:187px;width:12px;height:805px;background:#edecea;border-left:1px solid #d3d0cb;box-sizing:border-box"></div><div class="a" style="left:1404px;top:756px;width:7px;height:111px;background:#cdcdcd;border-radius:4px"></div></div><div class="a" style="left:343px;top:138px;width:1070px;height:48px;background:#fff;border-bottom:1px solid #d4d4d4;box-shadow:0 1px 2px rgba(0,0,0,.18)"></div><svg class="a" style="left:359.09999999999997px;top:148.9px" width="27.2" height="27.2" viewBox="0 0 24 24"><path fill="#616161" d="M17 3H5c-1.11 0-2 .9-2 2v14c0 1.1.89 2 2 2h14c1.1 0 2-.9 2-2V7l-4-4zm-5 16c-1.66 0-3-1.34-3-3s1.34-3 3-3 3 1.34 3 3-1.34 3-3 3zm3-10H5V5h10v4z"/></svg><svg class="a" style="left:410.09999999999997px;top:148.9px" width="27.2" height="27.2" viewBox="0 0 24 24"><path fill="#616161" d="M19 13h-6v6h-2v-6H5v-2h6V5h2v6h6v2z"/></svg><svg class="a" style="left:460.9px;top:148.9px" width="27.2" height="27.2" viewBox="0 0 24 24"><path fill="#616161" d="M9.64 7.64c.23-.5.36-1.05.36-1.64 0-2.21-1.79-4-4-4S2 3.79 2 6s1.79 4 4 4c.59 0 1.14-.13 1.64-.36L10 12l-2.36 2.36C7.14 14.13 6.59 14 6 14c-2.21 0-4 1.79-4 4s1.79 4 4 4 4-1.79 4-4c0-.59-.13-1.14-.36-1.64L12 14l7 7h3v-1L9.640000000000001 7.640000000000001zM6 8c-1.1 0-2-.89-2-2s.9-2 2-2 2 .89 2 2-.9 2-2 2zm0 12c-1.1 0-2-.89-2-2s.9-2 2-2 2 .89 2 2-.9 2-2 2zm6-7.500000000000001c-.28 0-.5-.22-.5-.5s.22-.5.5-.5.5.22.5.5-.22.5-.5.5zM19 3l-6 6 2 2 7-7V3z"/></svg><svg class="a" style="left:513.1999999999999px;top:148.9px" width="27.2" height="27.2" viewBox="0 0 24 24"><path fill="#616161" d="M16 1H4c-1.1 0-2 .9-2 2v14h2V3h12V1zm3 4H8c-1.1 0-2 .9-2 2v14c0 1.1.9 2 2 2h11c1.1 0 2-.9 2-2V7c0-1.1-.9-2-2-2zm0 16H8V7h11v14z"/></svg><svg class="a" style="left:564.1px;top:148.9px" width="27.2" height="27.2" viewBox="0 0 24 24"><path fill="#616161" d="M19 2h-4.180000000000001C14.4.84 13.3 0 12 0c-1.3 0-2.4.84-2.82 2H5c-1.1 0-2 .9-2 2v16c0 1.1.9 2 2 2h14c1.1 0 2-.9 2-2V4c0-1.1-.9-2-2-2zm-7 0c.55 0 1 .45 1 1s-.45 1-1 1-1-.45-1-1 .45-1 1-1zm7 18H5V4h2v3h10V4h2v16z"/></svg><svg class="a" style="left:617.1px;top:148.9px" width="27.2" height="27.2" viewBox="0 0 24 24"><path fill="#616161" d="M8 5v14l11-7z"/></svg><svg class="a" style="left:667.1px;top:148.9px" width="27.2" height="27.2" viewBox="0 0 24 24"><path fill="#616161" d="M6 6h12v12H6z"/></svg><svg class="a" style="left:718.9px;top:148.9px" width="27.2" height="27.2" viewBox="0 0 24 24"><path fill="#616161" d="M17.65 6.35C16.2 4.9 14.21 4 12 4c-4.42 0-7.99 3.58-7.99 8s3.57 8 7.99 8c3.73 0 6.84-2.55 7.73-6h-2.08c-.82 2.33-3.04 4-5.65 4-3.31 0-6-2.69-6-6s2.69-6 6-6c1.66 0 3.14.69 4.22 1.78L13 11h7V4l-2.35 2.35z"/></svg><svg class="a" style="left:770.4px;top:148.9px" width="27.2" height="27.2" viewBox="0 0 24 24"><path fill="#616161" d="M4 18l8.5-6L4 6v12zm9-12v12l8.5-6L13 6z"/></svg><div class="t" style="left:834.51px;top:148px;font-family:'DejaVu Sans','Liberation Sans',sans-serif;font-size:22.1px;line-height:26px;color:#111;font-kerning:none;letter-spacing:0.530px;">Code</div><svg class="a" style="left:966px;top:156px" width="20" height="16" viewBox="0 0 20 16"><path d="M3.4 3.8 L10 10.4 L16.6 3.8" stroke="#616161" stroke-width="2.4" fill="none"/></svg><div class="t" style="left:1260.14px;top:149px;font-family:'DejaVu Sans','Liberation Sans',sans-serif;font-size:22.1px;line-height:26px;color:#1f1f1f;font-kerning:none;letter-spacing:0.046px;">Julia 1.5.2</div><div class="a" style="left:1384.5px;top:150.5px;width:22px;height:22px;box-sizing:border-box;border:2.2px solid #5c5c5c;border-radius:50%"></div><div class="t" style="left:307.00px;top:1008px;font-family:'Liberation Sans',sans-serif;font-size:25.5px;line-height:28px;color:#1b1b1b;font-kerning:none;">0</div><div class="a" style="left:340px;top:1010.5px;width:26px;height:25.5px;background:#3f3f3f"></div><div class="t" style="left:342.92px;top:1016px;font-family:'DejaVu Sans Mono','Liberation Mono',monospace;font-size:13.5px;line-height:16px;color:#fff;font-kerning:none;letter-spacing:3.826px;font-weight:bold;">$_</div><div class="t" style="left:383.41px;top:1008px;font-family:'Liberation Sans',sans-serif;font-size:25.5px;line-height:28px;color:#1b1b1b;font-kerning:none;">4</div><svg class="a" style="left:411.8px;top:1008px" width="29" height="29" viewBox="0 0 24 24"><path fill="#4d4d4d" d="M15 9H9v6h6V9zm-2 4h-2v-2h2v2zm8-2V9h-2V7c0-1.1-.9-2-2-2h-2V3h-2v2h-2V3H9v2H7c-1.1 0-2 .9-2 2v2H3v2h2v2H3v2h2v2c0 1.1.9 2 2 2h2v2h2v-2h2v2h2v-2h2c1.1 0 2-.9 2-2v-2h2v-2h-2v-2h2zm-4 6H7V7h10v10z"/></svg><div class="t" style="left:456.60px;top:1008px;font-family:'Liberation Sans',sans-serif;font-size:25.5px;line-height:28px;color:#1b1b1b;font-kerning:none;letter-spacing:-0.817px;">Julia 1.5.2 | ...</div><div class="t" style="left:633.34px;top:1008px;font-family:'Liberation Sans',sans-serif;font-size:25.5px;line-height:28px;color:#1b1b1b;font-kerning:none;letter-spacing:-0.524px;">Saving compl...</div><div class="t" style="left:834.91px;top:1008px;font-family:'Liberation Sans',sans-serif;font-size:25.5px;line-height:28px;color:#1b1b1b;font-kerning:none;letter-spacing:-0.823px;">Mode: Comm...</div><svg class="a" style="left:1032px;top:1007px" width="28" height="28" viewBox="0 0 28 28"><path d="M14 2.6 C10.5 4.4 6.6 5.2 2.8 5.6 C2.8 14 5.4 21.6 14 25.2 C22.6 21.6 25.2 14 25.2 5.600000000000001 C21.4 5.2 17.5 4.4 14 2.6Z" stroke="#4d4d4d" stroke-width="2.3" fill="none" stroke-linejoin="round"/><path d="M10 9.4 L18 17.4 M18 9.4 L10 17.4" stroke="#4d4d4d" stroke-width="2.3"/></svg><div class="t" style="left:1084.91px;top:1008px;font-family:'Liberation Sans',sans-serif;font-size:25.5px;line-height:28px;color:#1b1b1b;font-kerning:none;letter-spacing:-0.728px;">Ln 1, C...</div><div class="t" style="left:1217.11px;top:1008px;font-family:'Liberation Sans',sans-serif;font-size:25.5px;line-height:28px;color:#1b1b1b;font-kerning:none;letter-spacing:-0.539px;">theoremtest.ip...</div></div></div></div></div></div></div>
<i class="nv" style="left:297px;top:1px"></i><i class="nv" style="left:1398px;top:1px"></i><i class="nv" style="left:297px;top:1044px"></i><i class="nv" style="left:1398px;top:1044px"></i><i class="nh" style="left:271px;top:28px"></i><i class="nh" style="left:271px;top:1020px"></i><i class="nh" style="left:1423px;top:28px"></i><i class="nh" style="left:1423px;top:1020px"></i>
</div>
</body></html>
